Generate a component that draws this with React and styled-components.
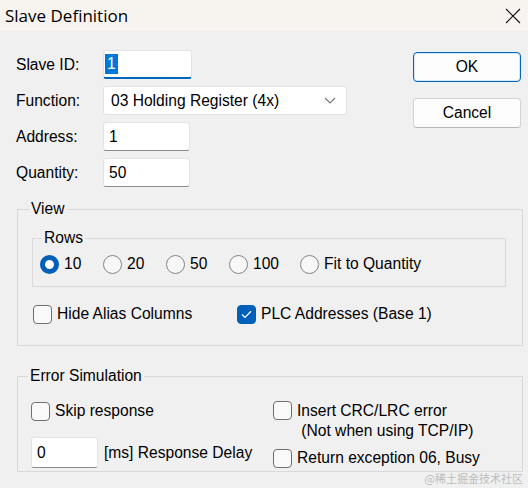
import React from 'react'
import styled, { createGlobalStyle, css } from 'styled-components'

const GlobalStyle = createGlobalStyle`
  html, body {
    margin: 0;
    padding: 0;
    background: #f0f0f0;
  }
`

const Dialog = styled.div`
  position: relative;
  width: 528px;
  height: 488px;
  overflow: hidden;
  background: #f0f0f0;
  color: #000;
  font-family: 'Liberation Sans', Arial, sans-serif;
  font-size: 15.6px;
`

const TitleBar = styled.div`
  display: flex;
  align-items: center;
  justify-content: space-between;
  height: 31px;
  padding: 0 7px 0 5px;
  background: #f7f4f0;
  font-family: 'Open Sans', 'Noto Sans', sans-serif;
  font-size: 17px;
`

const Body = styled.div`
  padding: 19px 5px 0 16px;
`

const Top = styled.div`
  display: flex;
  justify-content: space-between;
  align-items: flex-start;
`

const FormGrid = styled.div`
  display: grid;
  grid-template-columns: 87px auto;
  grid-auto-rows: 29px;
  row-gap: 7px;
  align-items: center;
`

const Label = styled.span`
  line-height: 20px;
`

const TextBox = styled.div`
  box-sizing: border-box;
  display: flex;
  align-items: center;
  width: ${(p) => p.$w}px;
  height: ${(p) => p.$h || 29}px;
  padding: 0 5px;
  background: #fff;
  border: 1px solid #e4e4e4;
  border-bottom-color: #8c8c8c;
  border-radius: 3px;

  ${(p) =>
    p.$focus
      ? css`
          padding-left: 1px;
          border-bottom: 2px solid #0067c0;
        `
      : ''}
`

const Selected = styled.span`
  padding: 0 2px;
  line-height: 20px;
  background: #0078d7;
  color: #fff;
`

const Select = styled(TextBox)`
  justify-content: space-between;
  padding: 0 10px 0 7px;
  border-bottom-color: #e0e0e0;
`

const ButtonColumn = styled.div`
  display: flex;
  flex-direction: column;
  gap: 16px;
  margin: 2px 2px 0 0;
`

const Button = styled.button`
  box-sizing: border-box;
  width: 108px;
  height: 30px;
  padding: 0;
  border: 1px solid #d3d3d3;
  border-bottom-color: #b8b8b8;
  border-radius: 4px;
  background: #fdfdfd;
  color: #000;
  font: inherit;

  ${(p) =>
    p.$default
      ? css`
          border: 1px solid #0067c0;
          box-shadow: inset 0 0 0 1px #d6e6f5;
        `
      : ''}
`

const Group = styled.fieldset`
  box-sizing: border-box;
  margin: ${(p) => p.$margin};
  padding: ${(p) => p.$padding};
  border: 1px solid #d9d9d9;
  border-radius: 0;
  min-inline-size: 0;
`

const Legend = styled.legend`
  margin-left: ${(p) => p.$offset}px;
  padding: 0 2px;
  line-height: 18px;
`

const RadioRow = styled.div`
  display: grid;
  grid-template-columns: 63px 63px 63px 71px auto;
`

const Option = styled.label`
  display: flex;
  align-items: ${(p) => (p.$top ? 'flex-start' : 'center')};
  gap: 5px;
  line-height: 20px;
  white-space: nowrap;
`

const RadioMark = styled.span`
  box-sizing: border-box;
  flex: none;
  width: 19px;
  height: 19px;
  border-radius: 50%;
  border: 1px solid #858585;
  background: #f7f7f7;

  ${(p) =>
    p.$checked
      ? css`
          border: 5.5px solid #005fb8;
          background: #fff;
        `
      : ''}
`

const CheckMark = styled.span`
  box-sizing: border-box;
  display: flex;
  align-items: center;
  justify-content: center;
  flex: none;
  width: 19px;
  height: 19px;
  border: 1px solid #707070;
  border-radius: 4px;
  background: #f9f9f9;

  ${(p) =>
    p.$checked
      ? css`
          border-color: #005fb8;
          background: #005fb8;
        `
      : ''}
`

const CheckRow = styled.div`
  display: grid;
  grid-template-columns: 204px auto;
  margin-top: 17px;
  padding-left: 1px;
`

const ErrorGrid = styled.div`
  display: grid;
  grid-template-columns: 242px auto;
`

const Column = styled.div`
  display: flex;
  flex-direction: column;
  gap: ${(p) => p.$gap}px;
`

const DelayRow = styled.div`
  display: flex;
  align-items: center;
  gap: 6px;
`

const Lines = styled.span`
  display: flex;
  flex-direction: column;
`

const Watermark = styled.div`
  position: absolute;
  right: 5px;
  bottom: 3px;
  color: #bdbdbd;
  font-family: 'Noto Sans CJK SC', sans-serif;
  font-size: 11px;
  line-height: 14px;
`

const Radio = ({ checked, children }) => (
  <Option>
    <RadioMark $checked={checked} />
    {children}
  </Option>
)

const Check = ({ checked, top, children }) => (
  <Option $top={top}>
    <CheckMark $checked={checked}>
      {checked && (
        <svg width="11" height="9" viewBox="0 0 11 9">
          <path d="M1 4.6 L4 7.4 L10 1.2" fill="none" stroke="#fff" strokeWidth="1.3" />
        </svg>
      )}
    </CheckMark>
    {children}
  </Option>
)

const App = () => (
  <Dialog>
    <GlobalStyle />
    <TitleBar>
      <span>Slave Definition</span>
      <svg width="16" height="16" viewBox="0 0 16 16">
        <path d="M1 1 L15 15 M15 1 L1 15" stroke="#111" strokeWidth="1.1" />
      </svg>
    </TitleBar>
    <Body>
      <Top>
        <FormGrid>
          <Label>Slave ID:</Label>
          <TextBox $w={89} $focus>
            <Selected>1</Selected>
          </TextBox>
          <Label>Function:</Label>
          <Select $w={244}>
            <span>03 Holding Register (4x)</span>
            <svg width="12" height="7" viewBox="0 0 12 7">
              <path d="M1 1 L6 6 L11 1" fill="none" stroke="#777" strokeWidth="1.1" />
            </svg>
          </Select>
          <Label>Address:</Label>
          <TextBox $w={87}>1</TextBox>
          <Label>Quantity:</Label>
          <TextBox $w={87}>50</TextBox>
        </FormGrid>
        <ButtonColumn>
          <Button $default>OK</Button>
          <Button>Cancel</Button>
        </ButtonColumn>
      </Top>

      <Group $margin="13px 0 0 1px" $padding="11px 16px 21px 14px">
        <Legend $offset={-3}>View</Legend>
        <Group $margin="0" $padding="7px 10px 12px 7px">
          <Legend $offset={2}>Rows</Legend>
          <RadioRow>
            <Radio checked>10</Radio>
            <Radio>20</Radio>
            <Radio>50</Radio>
            <Radio>100</Radio>
            <Radio>Fit to Quantity</Radio>
          </RadioRow>
        </Group>
        <CheckRow>
          <Check>Hide Alias Columns</Check>
          <Check checked>PLC Addresses (Base 1)</Check>
        </CheckRow>
      </Group>

      <Group $margin="21px 0 0 1px" $padding="16px 16px 3px 13px">
        <Legend $offset={-3}>Error Simulation</Legend>
        <ErrorGrid>
          <Column $gap={16}>
            <Check>Skip response</Check>
            <DelayRow>
              <TextBox $w={67} $h={31}>0</TextBox>
              <span>[ms] Response Delay</span>
            </DelayRow>
          </Column>
          <Column $gap={7}>
            <Check top>
              <Lines>
                <span>Insert CRC/LRC error</span>
                <span>&nbsp;(Not when using TCP/IP)</span>
              </Lines>
            </Check>
            <Check>Return exception 06, Busy</Check>
          </Column>
        </ErrorGrid>
      </Group>
    </Body>
    <Watermark>@稀土掘金技术社区</Watermark>
  </Dialog>
)

export default App
